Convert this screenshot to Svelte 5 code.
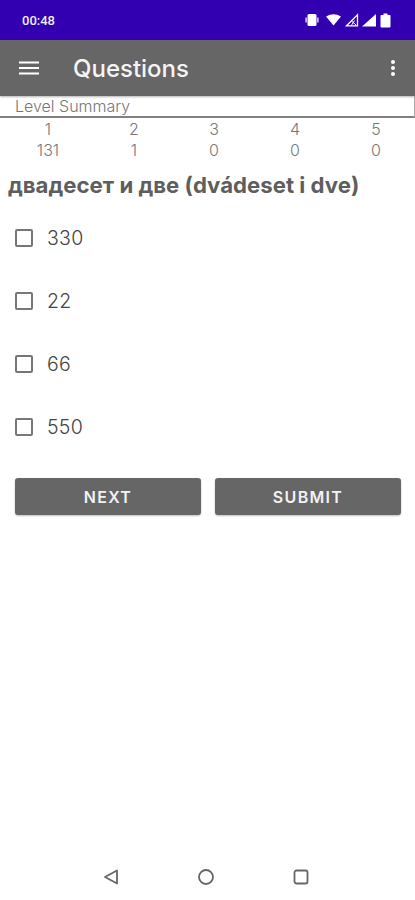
<script>
  const levels = [
    { level: 1, count: 131 },
    { level: 2, count: 1 },
    { level: 3, count: 0 },
    { level: 4, count: 0 },
    { level: 5, count: 0 }
  ];
  const answers = ["330", "22", "66", "550"];
</script>

<div class="screen">
  <header class="status">
    <span class="time">00:48</span>
    <div class="status-icons">
      <svg width="14" height="14" viewBox="0 0 14 14" fill="#fff">
        <rect x="2.500" y="1" width="9" height="12" rx="1.500" />
        <path d="M0.500 4.500h1.200v5H0.500zM12.300 4.500h1.200v5h-1.200z" />
      </svg>
      <svg class="wifi" width="15" height="14" viewBox="0 0 15 14" fill="#fff">
        <path d="M0 3.500Q7.500 -1 15 3.500L7.500 12.500z" />
      </svg>
      <svg width="14" height="14" viewBox="0 0 14 14" fill="none" stroke="#fff" stroke-width="1.300">
        <path d="M1.500 12.800L12.500 1.800v11z" />
        <path d="M6 13L9.500 7.500M6.500 8l4.500 4" stroke-width="1" />
      </svg>
      <svg class="signal" width="14" height="14" viewBox="0 0 14 14" fill="#fff">
        <path d="M0 13.500L14 1v12.500z" />
      </svg>
      <svg width="11" height="15" viewBox="0 0 11 15" fill="#fff">
        <path d="M3.500 0.500h4v1.500H9.500a1 1 0 0 1 1 1V13.500a1 1 0 0 1 -1 1H1.500a1 1 0 0 1 -1 -1V3a1 1 0 0 1 1 -1H3.500z" />
      </svg>
    </div>
  </header>

  <nav class="toolbar">
    <svg class="menu" width="20" height="14" viewBox="0 0 20 14" fill="#fff">
      <rect y="0.500" width="20" height="2" />
      <rect y="6" width="20" height="2" />
      <rect y="11.500" width="20" height="2" />
    </svg>
    <h1>Questions</h1>
    <svg class="more" width="6" height="18" viewBox="0 0 6 18" fill="#fff">
      <circle cx="3" cy="3" r="2" />
      <circle cx="3" cy="9" r="2" />
      <circle cx="3" cy="15" r="2" />
    </svg>
  </nav>

  <main>
    <div class="summary-title">Level Summary</div>
    <div class="summary-grid">
      {#each levels as row}
        <span>{row.level}</span>
      {/each}
      {#each levels as row}
        <span>{row.count}</span>
      {/each}
    </div>

    <h2>двадесет и две (dvádeset i dve)</h2>

    <ul class="answers">
      {#each answers as answer}
        <li>
          <span class="box"></span>
          <span class="label">{answer}</span>
        </li>
      {/each}
    </ul>

    <div class="actions">
      <button>NEXT</button>
      <button>SUBMIT</button>
    </div>
  </main>

  <footer class="nav-bar">
    <svg width="18" height="18" viewBox="0 0 18 18" fill="none" stroke="#666" stroke-width="1.800" stroke-linejoin="round">
      <path d="M15 2.500V15.500L3 9z" />
    </svg>
    <svg width="18" height="18" viewBox="0 0 18 18" fill="none" stroke="#666" stroke-width="1.800">
      <circle cx="9" cy="9" r="7" />
    </svg>
    <svg width="18" height="18" viewBox="0 0 18 18" fill="none" stroke="#666" stroke-width="1.800">
      <rect x="2.500" y="2.500" width="13" height="13" rx="2" />
    </svg>
  </footer>
</div>

<style>
  :global(body) {
    margin: 0;
    background: #fff;
  }

  .screen {
    width: 415px;
    height: 900px;
    display: flex;
    flex-direction: column;
    font-family: Inter, "Liberation Sans", sans-serif;
    overflow: hidden;
  }

  .status {
    height: 40px;
    flex: none;
    background: #3200b0;
    color: #fff;
    display: flex;
    align-items: center;
    justify-content: space-between;
    padding: 0 24px 0 22px;
  }

  .time {
    font-family: Roboto, sans-serif;
    font-weight: 500;
    font-size: 13px;
    color: #eee;
  }

  .status-icons {
    display: flex;
    align-items: center;
    gap: 4px;
  }

  .wifi {
    margin: 0 0 0 3px;
  }

  .signal {
    margin-left: -1px;
  }

  .toolbar {
    height: 56px;
    flex: none;
    background: #666;
    display: flex;
    align-items: center;
    padding: 0 19px;
    box-shadow: 0 1px 2px rgba(0, 0, 0, 0.3);
  }

  .toolbar h1 {
    margin: 0 0 0 34px;
    font-weight: 500;
    font-size: 24px;
    color: #f4f4f4;
    flex: 1;
  }

  main {
    flex: 1;
  }

  .summary-title {
    height: 22px;
    box-sizing: border-box;
    padding-left: 15px;
    font-size: 16px;
    font-weight: 300;
    line-height: 21px;
    color: #777;
    border-bottom: 2px solid #808080;
    border-right: 1px solid #aaa;
  }

  .summary-grid {
    display: grid;
    grid-template-columns: 86px 86px 74px 88px 74px;
    padding-left: 5px;
    font-size: 16px;
    font-weight: 300;
    line-height: 21px;
    color: #777;
    text-align: center;
    padding-top: 1px;
  }

  h2 {
    margin: 10px 0 0 8px;
    font-size: 22.200px;
    line-height: 28px;
    font-weight: 700;
    color: #5e5e5e;
    white-space: nowrap;
  }

  .answers {
    list-style: none;
    margin: 23px 0 0;
    padding: 0 0 0 15px;
    display: flex;
    flex-direction: column;
    gap: 31px;
  }

  .answers li {
    height: 32px;
    display: flex;
    align-items: center;
    gap: 14px;
  }

  .box {
    width: 18px;
    height: 18px;
    box-sizing: border-box;
    border: 2px solid #777;
    border-radius: 2px;
  }

  .label {
    font-size: 19.500px;
    font-weight: 300;
    letter-spacing: 0.300px;
    color: #444;
  }

  .actions {
    display: flex;
    gap: 14px;
    padding: 0 14px 0 15px;
    margin-top: 35px;
  }

  .actions button {
    flex: 1;
    height: 37px;
    border: none;
    border-radius: 3px;
    background: #666;
    color: #f2f2f2;
    font-family: Inter, "Liberation Sans", sans-serif;
    font-weight: 600;
    font-size: 16px;
    letter-spacing: 1.300px;
    box-shadow: 0 1px 2px rgba(0, 0, 0, 0.25);
  }

  .nav-bar {
    height: 46px;
    flex: none;
    display: flex;
    align-items: center;
    justify-content: space-between;
    padding: 0 105px 0 102px;
  }
</style>
